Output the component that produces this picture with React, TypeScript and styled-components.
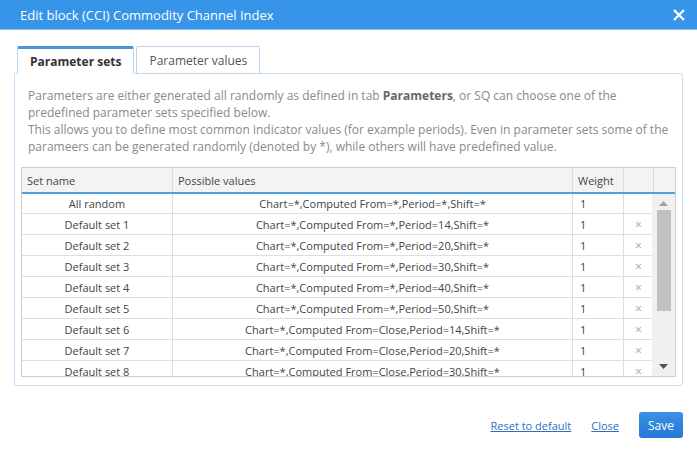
import styled, { createGlobalStyle } from 'styled-components';

const GlobalStyle = createGlobalStyle`
    html, body {
        margin: 0;
        padding: 0;
        background: #fff;
    }
    body {
        font-family: "Open Sans", "DejaVu Sans", sans-serif;
        color: #444;
    }
`;

const Dialog = styled.div`
    width: 697px;
    height: 453px;
    background: #fff;
    overflow: hidden;
`;

const TitleBar = styled.div`
    height: 30px;
    box-sizing: border-box;
    background-color: #3795e9;
    border-bottom: 1px solid #8cc0f0;
    display: flex;
    align-items: center;
    justify-content: space-between;
    padding: 0 10px 0 20px;
    color: #fff;
    font-size: 13px;
`;

const CloseIcon = styled.button`
    border: none;
    background: none;
    padding: 0;
    width: 16px;
    height: 16px;
    display: flex;
    align-items: center;
    justify-content: center;
    cursor: pointer;
`;

const Body = styled.div`
    padding: 16px 14px 0 14px;
`;

const Tabs = styled.div`
    display: flex;
    gap: 2px;
    padding-left: 3px;
    position: relative;
    z-index: 1;
`;

const Tab = styled.div<{ $active?: boolean }>`
    padding: 0 12px;
    display: flex;
    align-items: center;
    font-size: 12px;
    font-weight: ${(p) => (p.$active ? 700 : 400)};
    color: ${(p) => (p.$active ? '#333' : '#555')};
    background: #fff;
    border: 1px solid #bcd6ef;
    border-top: ${(p) => (p.$active ? '3px solid #4c93d8' : '1px solid #bcd6ef')};
    border-bottom: ${(p) => (p.$active ? '1px solid #fff' : '1px solid #bcd6ef')};
    border-radius: 2px 2px 0 0;
    margin-bottom: -1px;
    height: ${(p) => (p.$active ? '24px' : '26px')};
`;

const Panel = styled.div`
    border: 1px solid #c5dcf2;
    border-radius: 0 3px 3px 3px;
    padding: 13px 6px 8px 6px;
`;

const Description = styled.div`
    padding: 0 7px;
    font-size: 12px;
    line-height: 17px;
    color: #8a8a8a;
    margin-bottom: 12px;
    white-space: nowrap;

    b {
        color: #666;
        font-weight: 700;
    }
`;

const Table = styled.div`
    border: 1px solid #cfcfcf;
    font-size: 11px;
    color: #444;
`;

const HeaderRow = styled.div`
    display: grid;
    grid-template-columns: 151px 400px 51px 30px 1fr;
    height: 24px;
    background: #f3f3f3;
    border-bottom: 2px solid #4ea1e0;
`;

const HeaderCell = styled.div`
    display: flex;
    align-items: center;
    padding-left: 5px;
    border-right: 1px solid #dcdcdc;
    color: #444;

    &:last-child {
        border-right: none;
    }
`;

const BodyArea = styled.div`
    display: flex;
    height: 182px;
    overflow: hidden;
`;

const Rows = styled.div`
    width: 632px;
    margin-top: -1px;
    overflow: hidden;
`;

const Row = styled.div`
    display: grid;
    grid-template-columns: 151px 400px 51px 30px;
    height: 20px;
    border-bottom: 1px solid #dedede;
    background: #fff;
`;

const Cell = styled.div<{ $align?: 'left' | 'center' }>`
    display: flex;
    align-items: center;
    justify-content: ${(p) => (p.$align === 'left' ? 'flex-start' : 'center')};
    padding-left: ${(p) => (p.$align === 'left' ? '7px' : '0')};
    border-right: 1px solid #dedede;
    white-space: nowrap;
    overflow: hidden;
`;

const RemoveMark = styled.span`
    color: #8f9fdc;
    font-size: 12px;
`;

const ScrollBar = styled.div`
    width: 23px;
    background: #f0f0f0;
    display: flex;
    flex-direction: column;
    align-items: center;
    padding: 5px 0 6px;
    box-sizing: border-box;
`;

const ScrollArrow = styled.div`
    height: 8px;
    display: flex;
    align-items: center;
    justify-content: center;
`;

const ScrollTrack = styled.div`
    flex: 1;
    width: 14px;
    margin: 3px 0;
`;

const ScrollThumb = styled.div`
    width: 14px;
    height: 101px;
    background: #c1c1c1;
`;

const Footer = styled.div`
    display: flex;
    justify-content: flex-end;
    align-items: center;
    gap: 20px;
    padding-top: 26px;
`;

const LinkButton = styled.a`
    color: #2d70c0;
    text-decoration: underline;
    font-size: 11px;
    cursor: pointer;
`;

const SaveButton = styled.button`
    width: 44px;
    height: 26px;
    border: none;
    border-radius: 3px;
    background: linear-gradient(#3a91e4, #2379d6);
    color: #fff;
    font-family: "Open Sans", "DejaVu Sans", sans-serif;
    font-size: 12px;
    padding: 0;
    cursor: pointer;
`;

const sets = [
    { name: 'All random', values: 'Chart=*,Computed From=*,Period=*,Shift=*', removable: false },
    { name: 'Default set 1', values: 'Chart=*,Computed From=*,Period=14,Shift=*', removable: true },
    { name: 'Default set 2', values: 'Chart=*,Computed From=*,Period=20,Shift=*', removable: true },
    { name: 'Default set 3', values: 'Chart=*,Computed From=*,Period=30,Shift=*', removable: true },
    { name: 'Default set 4', values: 'Chart=*,Computed From=*,Period=40,Shift=*', removable: true },
    { name: 'Default set 5', values: 'Chart=*,Computed From=*,Period=50,Shift=*', removable: true },
    { name: 'Default set 6', values: 'Chart=*,Computed From=Close,Period=14,Shift=*', removable: true },
    { name: 'Default set 7', values: 'Chart=*,Computed From=Close,Period=20,Shift=*', removable: true },
    { name: 'Default set 8', values: 'Chart=*,Computed From=Close,Period=30,Shift=*', removable: true },
];

export default function App() {
    return (
        <Dialog>
            <GlobalStyle />
            <TitleBar>
                <span>Edit block (CCI) Commodity Channel Index</span>
                <CloseIcon>
                    <svg width="12" height="12" viewBox="0 0 12 12">
                        <path d="M1 1 L11 11 M11 1 L1 11" stroke="#fff" strokeWidth="2.2" />
                    </svg>
                </CloseIcon>
            </TitleBar>
            <Body>
                <Tabs>
                    <Tab $active>Parameter sets</Tab>
                    <Tab>Parameter values</Tab>
                </Tabs>
                <Panel>
                    <Description>
                        Parameters are either generated all randomly as defined in tab <b>Parameters</b>, or SQ can choose one of the
                        <br />
                        predefined parameter sets specified below.
                        <br />
                        This allows you to define most common indicator values (for example periods). Even in parameter sets some of the
                        <br />
                        parameers can be generated randomly (denoted by *), while others will have predefined value.
                    </Description>
                    <Table>
                        <HeaderRow>
                            <HeaderCell>Set name</HeaderCell>
                            <HeaderCell>Possible values</HeaderCell>
                            <HeaderCell>Weight</HeaderCell>
                            <HeaderCell />
                            <HeaderCell />
                        </HeaderRow>
                        <BodyArea>
                            <Rows>
                                {sets.map((s) => (
                                    <Row key={s.name}>
                                        <Cell>{s.name}</Cell>
                                        <Cell>{s.values}</Cell>
                                        <Cell $align="left">1</Cell>
                                        <Cell>{s.removable && <RemoveMark>×</RemoveMark>}</Cell>
                                    </Row>
                                ))}
                            </Rows>
                            <ScrollBar>
                                <ScrollArrow>
                                    <svg width="9" height="5" viewBox="0 0 9 5">
                                        <path d="M0 5 L4.5 0 L9 5 Z" fill="#a3a3a3" />
                                    </svg>
                                </ScrollArrow>
                                <ScrollTrack>
                                    <ScrollThumb />
                                </ScrollTrack>
                                <ScrollArrow>
                                    <svg width="9" height="5" viewBox="0 0 9 5">
                                        <path d="M0 0 L9 0 L4.5 5 Z" fill="#505050" />
                                    </svg>
                                </ScrollArrow>
                            </ScrollBar>
                        </BodyArea>
                    </Table>
                </Panel>
                <Footer>
                    <LinkButton>Reset to default</LinkButton>
                    <LinkButton>Close</LinkButton>
                    <SaveButton>Save</SaveButton>
                </Footer>
            </Body>
        </Dialog>
    );
}
